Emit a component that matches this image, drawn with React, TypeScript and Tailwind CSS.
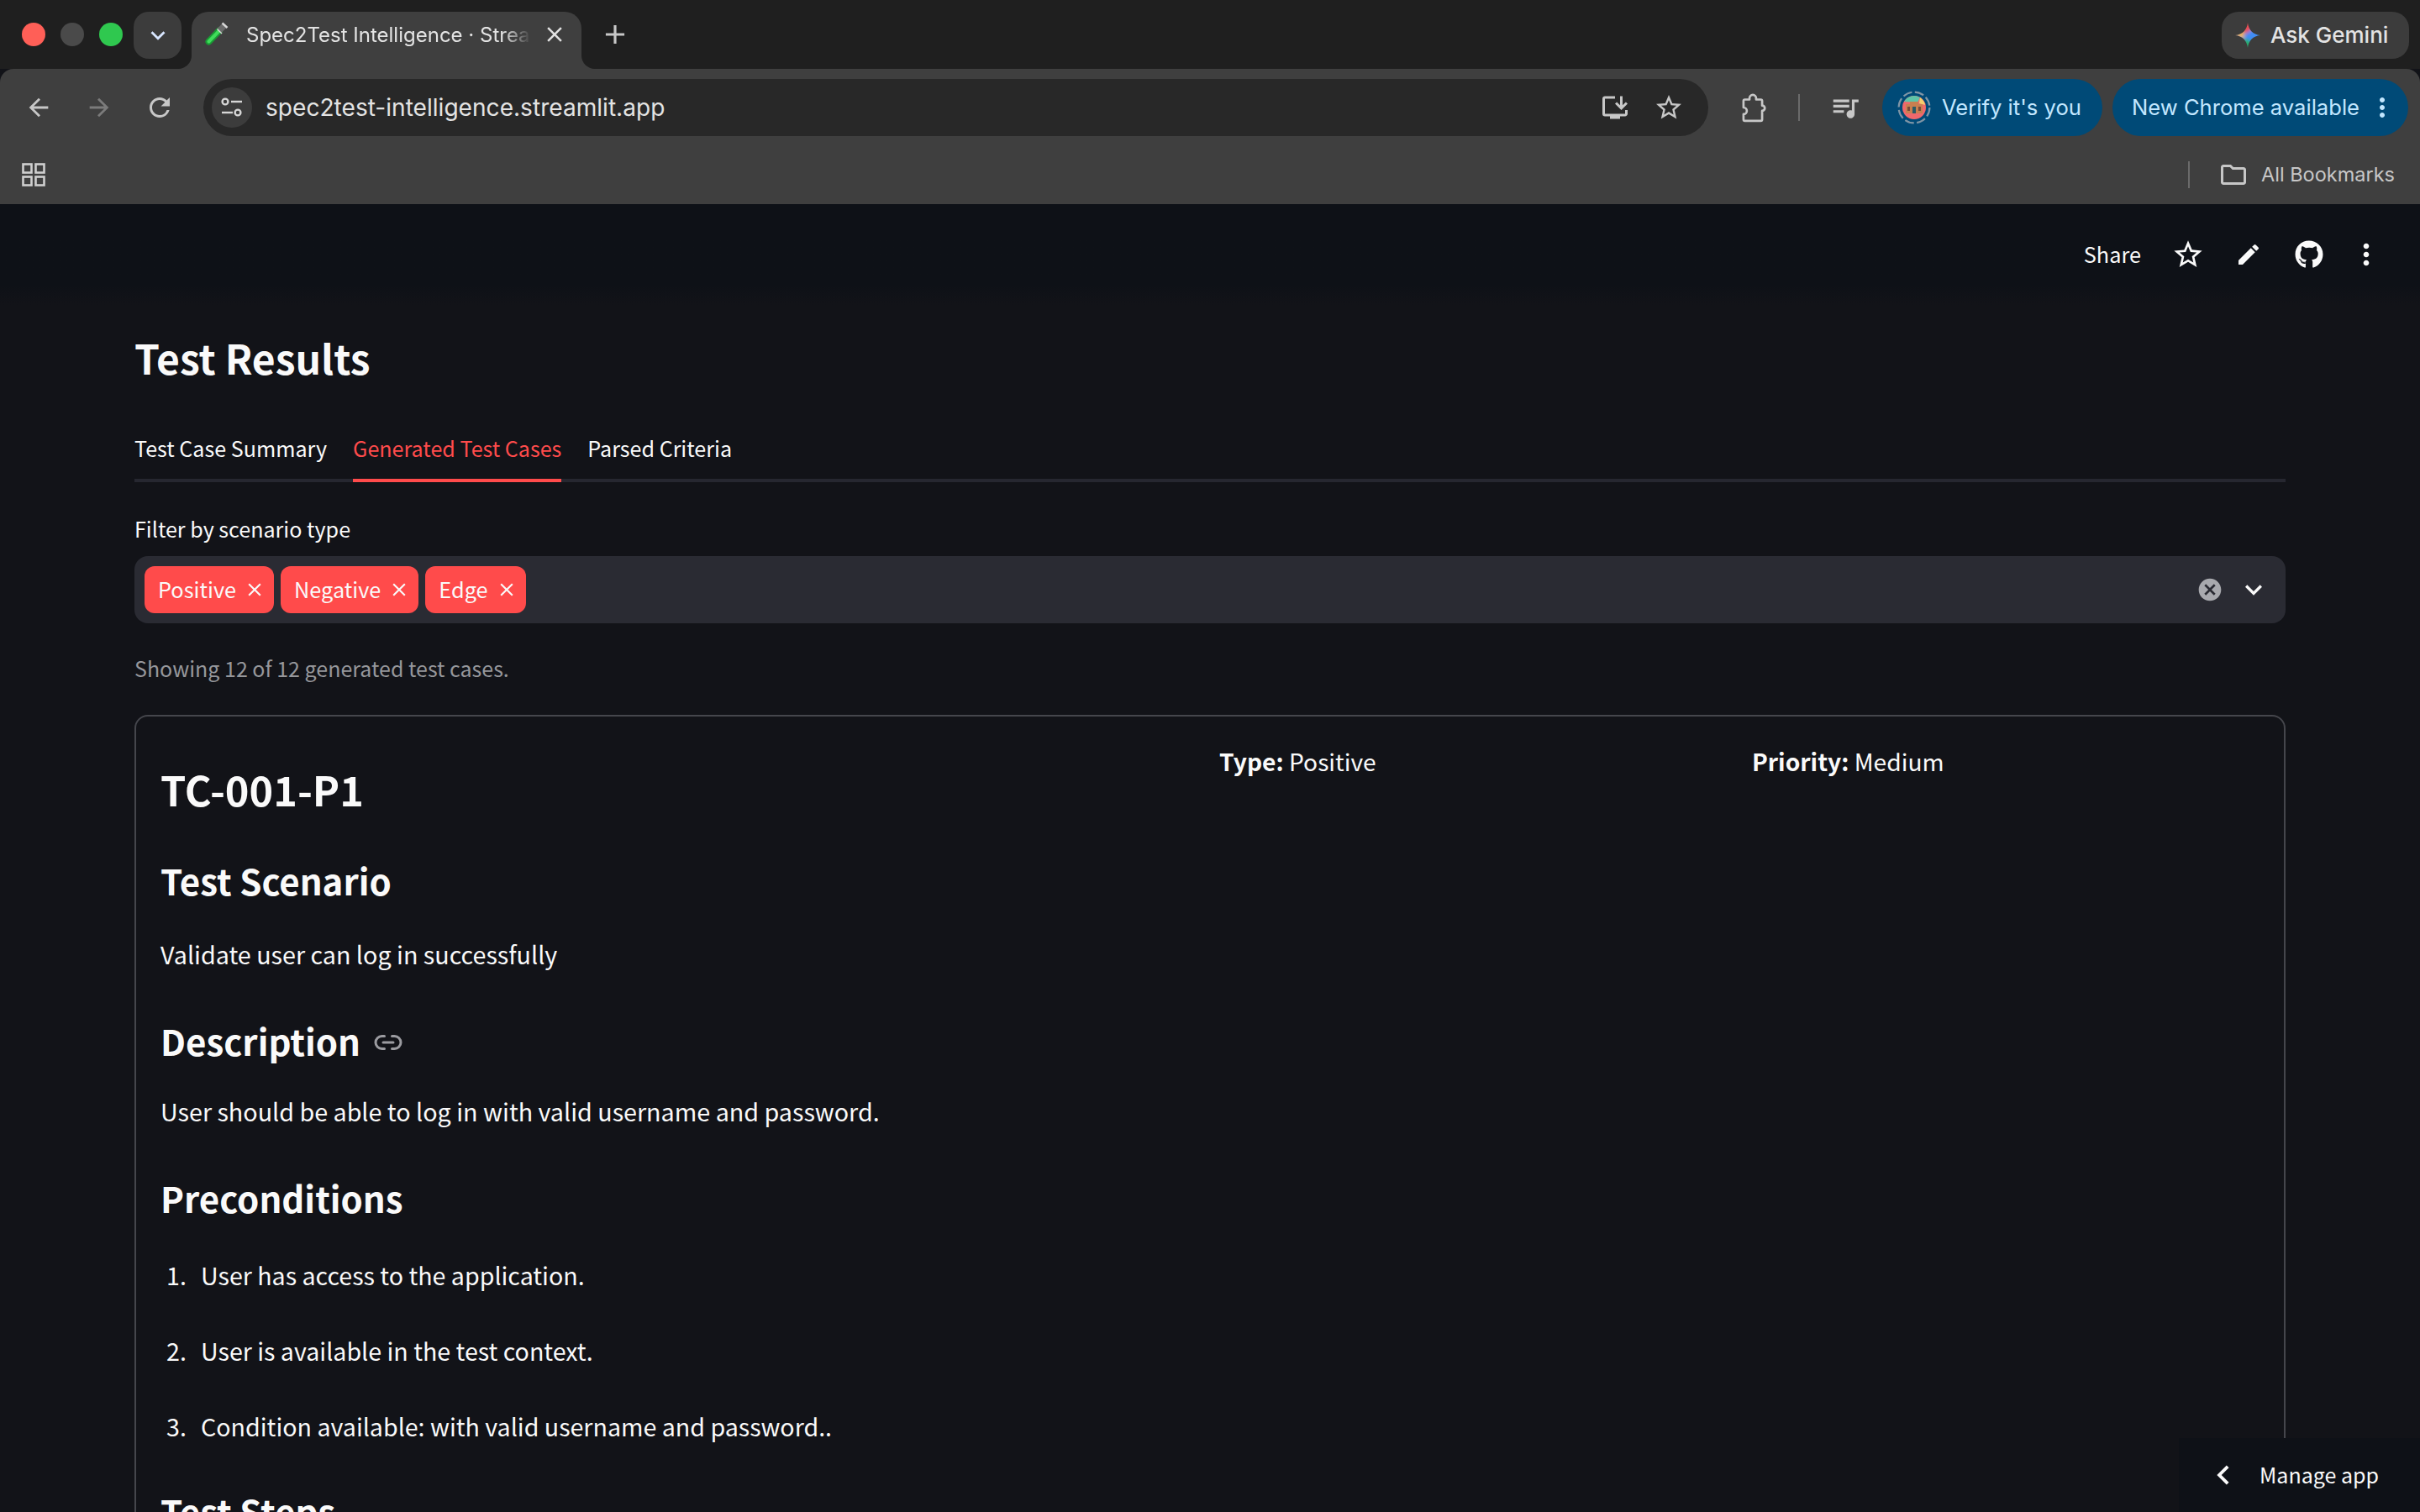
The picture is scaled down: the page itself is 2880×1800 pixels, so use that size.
import { MdArrowBack, MdArrowForward, MdCancel, MdChevronLeft, MdClose, MdEdit, MdExpandMore, MdKeyboardArrowDown, MdMoreVert, MdOutlineFolder, MdOutlineInstallDesktop, MdOutlineQueueMusic, MdRefresh, MdStarBorder, MdAdd } from 'react-icons/md';
import { FaGithub } from 'react-icons/fa';
import { Link2 } from 'lucide-react';

const chips = ['Positive', 'Negative', 'Edge'];
const preconditions = [
  'User has access to the application.',
  'User is available in the test context.',
  'Condition available: with valid username and password..',
];

function TuneIcon() {
  return (
    <svg width="26" height="24" viewBox="0 0 26 24" fill="none" stroke="#d6d6d6" strokeWidth="2.4">
      <circle cx="5" cy="5" r="3.4" />
      <path d="M12 5h13" />
      <path d="M1 18h13" />
      <circle cx="20" cy="18" r="3.4" />
    </svg>
  );
}

function Favicon() {
  return (
    <svg width="28" height="28" viewBox="0 0 28 28" fill="none">
      <path d="M4.5 23.5 L17 10.5" stroke="#1a9a34" strokeWidth="8" strokeLinecap="round" />
      <path d="M4.5 23.5 L17 10.5" stroke="#3fdc5a" strokeWidth="4" strokeLinecap="round" />
      <path d="M17 10.5 L23 4.5" stroke="#6a6a6a" strokeWidth="7" />
      <path d="M20.5 1.5 L26.5 7" stroke="#d8d8d8" strokeWidth="2.4" />
      <path d="M14.5 8.5 L20 14" stroke="#d8d8d8" strokeWidth="1.4" />
    </svg>
  );
}

function GeminiStar() {
  return (
    <svg width="30" height="30" viewBox="0 0 30 30">
      <defs>
        <clipPath id="gem">
          <path d="M15 0 C15.8 8.5 21.5 14.2 30 15 C21.5 15.8 15.8 21.5 15 30 C14.2 21.5 8.5 15.8 0 15 C8.5 14.2 14.2 8.5 15 0 Z" />
        </clipPath>
        <filter id="gemBlur">
          <feGaussianBlur stdDeviation="2" />
        </filter>
      </defs>
      <g clipPath="url(#gem)">
        <g filter="url(#gemBlur)">
          <rect width="30" height="30" fill="#3f8cf5" />
          <path d="M15 -4 L4 9 L13 13 L22 6 Z" fill="#ea4d4d" />
          <path d="M-4 15 L10 9 L11 19 Z" fill="#f5b52f" />
          <path d="M15 34 L7 20 L17 20 L20 26 Z" fill="#25ad5c" />
        </g>
      </g>
    </svg>
  );
}

function Avatar() {
  return (
    <svg width="40" height="40" viewBox="0 0 40 40" fill="none">
      <circle cx="20" cy="20" r="18.4" stroke="#7f95a6" strokeWidth="2.2" strokeDasharray="11 3.5" />
      <circle cx="20" cy="20" r="14" fill="#f0686c" />
      <path d="M8 13 a14 14 0 0 1 19 -5 L24 14 Z" fill="#5ec4a8" />
      <path d="M27 8 a14 14 0 0 1 6 9 L26 15 Z" fill="#f2cf6c" />
      <path d="M10 16h5v-3h10v3h5v11H10z" fill="#c97f50" />
      <path d="M18 19h4v8h-4z" fill="#2a5a66" />
      <path d="M12 19h3v5h-3zM25 19h3v5h-3z" fill="#7a4a38" />
    </svg>
  );
}

function AppsIcon() {
  return (
    <svg width="28" height="28" viewBox="0 0 28 28" fill="none" stroke="#cfcfcf" strokeWidth="2.6">
      <rect x="1.5" y="1.5" width="10" height="10" />
      <rect x="16.5" y="1.5" width="10" height="10" />
      <rect x="1.5" y="16.5" width="10" height="10" />
      <rect x="16.5" y="16.5" width="10" height="10" />
    </svg>
  );
}

function ExtensionIcon() {
  return (
    <svg width="38" height="38" viewBox="0 0 24 24" fill="none" stroke="#c7c7c7" strokeWidth="1.7" strokeLinejoin="round">
      <path d="M6 6h3.5V5a2.5 2.5 0 0 1 5 0v1H18a1 1 0 0 1 1 1v3.5a2 2 0 0 1 0 4V21a1 1 0 0 1-1 1H6a1 1 0 0 1-1-1v-4a2.5 2.5 0 0 0 0-5V7a1 1 0 0 1 1-1z" />
    </svg>
  );
}

function BrowserChrome() {
  return (
    <div className="font-['Inter','Liberation_Sans',sans-serif]">
      <div className="flex h-[82px] bg-[#1f1f1f]">
        <div className="flex h-[82px] items-center gap-[18px] pl-[26px]">
          <span className="h-7 w-7 rounded-full bg-[#ff5f57]" />
          <span className="h-7 w-7 rounded-full bg-[#4a4a4a]" />
          <span className="h-7 w-7 rounded-full bg-[#2fc84f]" />
        </div>
        <div className="ml-[13px] mt-[14px] flex h-[56px] w-[57px] items-center justify-center rounded-[18px] bg-[#3c3c3c] text-[#d8e6ff]">
          <MdKeyboardArrowDown size={34} />
        </div>
        <div className="relative ml-3 mt-[14px] flex h-[68px] w-[464px] items-start rounded-t-[20px] bg-[#3f3f3f] pl-4 pt-[12px]">
          <span className="absolute -left-4 bottom-0 h-4 w-4 bg-[#3f3f3f]">
            <span className="block h-full w-full rounded-br-2xl bg-[#1f1f1f]" />
          </span>
          <span className="absolute -right-4 bottom-0 h-4 w-4 bg-[#3f3f3f]">
            <span className="block h-full w-full rounded-bl-2xl bg-[#1f1f1f]" />
          </span>
          <Favicon />
          <span className="ml-[21px] mt-[-1px] w-[339px] overflow-hidden whitespace-nowrap text-[24px] leading-[34px] text-[#e3e3e3] [mask-image:linear-gradient(to_right,black_90%,transparent)]">
            Spec2Test Intelligence · Streamlit
          </span>
          <MdClose size={30} className="ml-[13px] text-[#e3e3e3]" />
        </div>
        <MdAdd size={38} className="ml-[21px] mt-[22px] text-[#c7c7c7]" />
        <div className="ml-auto mr-[13px] mt-[14px] flex h-[56px] w-[223px] items-center rounded-[20px] bg-[#3c3c3c] pl-4 text-[26px] font-medium text-[#e3e3e3]">
          <GeminiStar />
          <span className="ml-[12px] mt-[-2px]">Ask Gemini</span>
        </div>
      </div>
      <div className="h-[161px] rounded-t-[16px] bg-[#3f3f3f]">
        <div className="flex h-[80px] items-center pt-3">
          <MdArrowBack size={34} className="ml-[29px] text-[#c7c7c7]" />
          <MdArrowForward size={34} className="ml-[38px] text-[#7b7b7b]" />
          <MdRefresh size={36} className="ml-[37px] text-[#c7c7c7]" />
          <div className="ml-[34px] flex h-[68px] w-[1791px] items-center rounded-full bg-[#282828] pl-[10px]">
            <span className="flex h-12 w-12 items-center justify-center rounded-full bg-[#3c3c3c]">
              <TuneIcon />
            </span>
            <span className="ml-[16px] text-[28.1px] text-[#e3e3e3]">spec2test-intelligence.streamlit.app</span>
            <MdOutlineInstallDesktop size={36} className="ml-auto text-[#c7c7c7]" />
            <MdStarBorder size={36} className="ml-7 mr-[29px] text-[#c7c7c7]" />
          </div>
          <span className="ml-[34px]"><ExtensionIcon /></span>
          <span className="ml-[35px] h-8 w-[2px] bg-[#6a6a6a]" />
          <MdOutlineQueueMusic size={38} className="ml-[35px] text-[#c7c7c7]" />
          <div className="ml-[25px] flex h-[68px] w-[262px] items-center rounded-full bg-[#004a77] pl-[18px] text-[25.6px] text-[#c2e7ff]">
            <Avatar />
            <span className="ml-[13px]">Verify it's you</span>
          </div>
          <div className="ml-3 flex h-[68px] w-[352px] items-center rounded-full bg-[#004a77] pl-[23px] text-[25.6px] text-[#c2e7ff]">
            <span>New Chrome available</span>
            <MdMoreVert size={36} className="ml-auto mr-[13px]" />
          </div>
        </div>
        <div className="mt-[30px] flex h-8 items-center">
          <span className="ml-[26px]"><AppsIcon /></span>
          <span className="ml-auto h-8 w-[2px] bg-[#6a6a6a]" />
          <MdOutlineFolder size={36} className="ml-[34px] text-[#c7c7c7]" />
          <span className="ml-[15px] mr-[30px] text-[23.5px] text-[#c7c7c7]">All Bookmarks</span>
        </div>
      </div>
    </div>
  );
}

export default function App() {
  return (
    <div className="relative h-[1800px] w-[2880px] overflow-hidden bg-[#121318] font-['Noto_Sans_CJK_SC','Liberation_Sans',sans-serif] text-[#fafafa]">
      <BrowserChrome />

      <header className="flex h-[120px] items-start justify-end bg-gradient-to-b from-[#0e1117] from-80% to-[#121318] pt-10">
        <span className="mr-[36px] text-[25.3px] leading-[38px]">Share</span>
        <MdStarBorder size={40} className="mr-9" />
        <MdEdit size={32} className="mr-[39px] mt-1" />
        <FaGithub size={34} className="mr-[31px] mt-[3px]" />
        <MdMoreVert size={40} className="mr-[44px]" />
      </header>

      <main className="px-[160px]">
        <h1 className="mt-[32px] text-[48px] font-bold leading-[60px]">Test Results</h1>

        <div className="mt-[58px] flex gap-[31px] border-b-4 border-[#262730] text-[25.1px] leading-10">
          <span className="pb-[17px]">Test Case Summary</span>
          <span className="-mb-1 border-b-4 border-[#ff4b4b] pb-[17px] text-[#ff4b4b]">Generated Test Cases</span>
          <span className="pb-[17px]">Parsed Criteria</span>
        </div>

        <p className="mt-[35px] text-[25.1px] leading-10">Filter by scenario type</p>

        <div className="mt-[13px] flex h-20 items-center gap-2 rounded-2xl bg-[#2a2b33] pl-3">
          {chips.map((chip) => (
            <span key={chip} className="flex h-14 items-center gap-[9px] rounded-xl bg-[#ff4b4b] pl-4 pr-[10px] text-[25.3px]">
              {chip}
              <MdClose size={26} />
            </span>
          ))}
          <MdCancel size={32} className="ml-auto text-[#a8a9ae]" />
          <MdExpandMore size={40} className="ml-2 mr-[18px]" />
        </div>

        <p className="mt-[33px] text-[25px] leading-10 text-[#96979b]">Showing 12 of 12 generated test cases.</p>

        <section className="mt-9 h-[1000px] rounded-2xl border-2 border-[#45464c] pl-[29px] pr-[7px] pt-[33px]">
          <div className="grid grid-cols-[2fr_1fr_1fr] gap-2 text-[28.2px] leading-10">
            <h2 className="mt-[23px] text-[48.6px] font-bold leading-[60px]">TC-001-P1</h2>
            <p><b className="font-bold">Type:</b> Positive</p>
            <p><b className="font-bold">Priority:</b> Medium</p>
          </div>

          <h3 className="mt-[54px] text-[42px] font-bold leading-[50px]">Test Scenario</h3>
          <p className="mt-[43px] text-[28.7px] leading-10">Validate user can log in successfully</p>

          <h3 className="mt-[58px] flex items-center text-[42px] font-bold leading-[50px]">
            Description
            <Link2 size={36} strokeWidth={2} className="ml-[15px] mt-[3px] text-[#9b9ba0]" />
          </h3>
          <p className="mt-[39px] text-[28.7px] leading-10">User should be able to log in with valid username and password.</p>

          <h3 className="mt-[58px] text-[42px] font-bold leading-[50px]">Preconditions</h3>
          <ol className="mt-[47px] flex flex-col gap-[50px] text-[28.6px] leading-10">
            {preconditions.map((item, i) => (
              <li key={item} className="flex">
                <span className="w-[48px] pl-[7px]">{i + 1}.</span>
                <span>{item}</span>
              </li>
            ))}
          </ol>

          <h3 className="mt-[56px] text-[42px] font-bold leading-[50px]">Test Steps</h3>
        </section>
      </main>

      <div className="absolute bottom-0 right-0 flex h-[88px] w-[287px] items-center bg-[#0e1117] pl-[30px] text-[25px]">
        <MdChevronLeft size={46} />
        <span className="ml-[20px]">Manage app</span>
      </div>
    </div>
  );
}
